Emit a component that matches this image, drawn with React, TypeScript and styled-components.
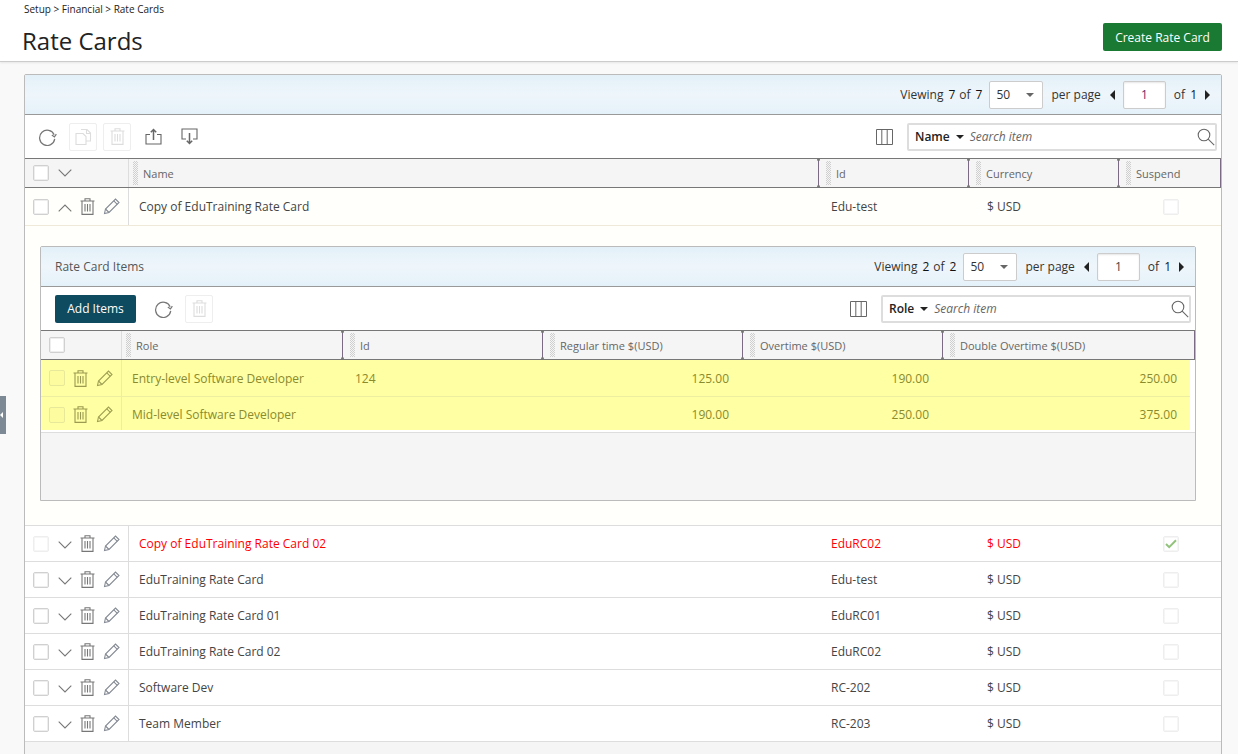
import React from "react";
import styled, { createGlobalStyle } from "styled-components";

const GlobalStyle = createGlobalStyle`
  html, body {
    margin: 0;
    padding: 0;
    height: 100%;
    overflow: hidden;
    background: #f9f9f9;
    font-family: "Open Sans", "Liberation Sans", sans-serif;
    font-size: 12px;
    color: #444;
  }
`;

const Page = styled.div`
  height: 754px;
  overflow: hidden;
  position: relative;
`;

const PageHeader = styled.header`
  align-items: flex-start;
  background: #fff;
  border-bottom: 1px solid #ccc;
  box-shadow: 0 1px 2px rgba(0, 0, 0, 0.08);
  box-sizing: border-box;
  display: flex;
  height: 62px;
  justify-content: space-between;
  padding: 0 16px 0 22px;
`;

const Breadcrumb = styled.div`
  color: #222;
  font-size: 10px;
  line-height: 14px;
  margin: 2px 0 0 2px;
`;

const Title = styled.h1`
  color: #222;
  font-size: 24px;
  font-weight: 400;
  line-height: 32px;
  margin: 9px 0 0;
`;

const PrimaryButton = styled.button`
  background: #1a7a34;
  border: none;
  border-radius: 2px;
  color: #fff;
  font-family: inherit;
  font-size: 12px;
  height: 28px;
  margin-top: 23px;
  padding: 0;
  width: 119px;
`;

const Content = styled.main`
  padding: 12px 16px 0 24px;
`;

const Panel = styled.section<{ $nested?: boolean }>`
  background: #f5f5f5;
  border: 1px solid #bbb;
  border-radius: 2px 2px 0 0;
  ${({ $nested }) => ($nested ? "height: 255px; box-sizing: border-box;" : "height: 700px;")}
`;

const TopBar = styled.div`
  align-items: center;
  background: linear-gradient(#e3f0f8, #eef6fb 50%, #e5f1f9);
  border-bottom: 1px solid #999;
  box-sizing: border-box;
  display: flex;
  height: 40px;
  justify-content: space-between;
  padding: 0 11px 0 14px;
`;

const BarTitle = styled.div`
  color: #555;
  font-size: 12px;
`;

const Pager = styled.div`
  align-items: center;
  color: #333;
  display: flex;
  font-size: 12px;
`;

const PagerNum = styled.span`
  color: #111;
  font-weight: 500;
  margin: 0 4px 0 5px;
`;

const PageSize = styled.div`
  align-items: center;
  background: #fff;
  border: 1px solid #ccc;
  border-radius: 2px;
  box-sizing: border-box;
  display: flex;
  height: 28px;
  justify-content: space-between;
  margin: 0 8px 0 3px;
  padding: 0 8px 0 6px;
  width: 54px;
`;

const Caret = styled.span<{ $dark?: boolean }>`
  border-left: 4px solid transparent;
  border-right: 4px solid transparent;
  border-top: 4px solid ${({ $dark }) => ($dark ? "#222" : "#666")};
  display: inline-block;
`;

const PageArrow = styled.span<{ $dir: "left" | "right" }>`
  border-bottom: 5px solid transparent;
  border-top: 5px solid transparent;
  ${({ $dir }) =>
    $dir === "left"
      ? "border-right: 5px solid #222; margin: 0 8px 0 9px;"
      : "border-left: 5px solid #222; margin-left: 4px;"}
`;

const PageInput = styled.div<{ $tone?: string }>`
  align-items: center;
  background: #fff;
  border: 1px solid #ccc;
  border-radius: 2px;
  box-shadow: inset 0 1px 2px rgba(0, 0, 0, 0.1);
  box-sizing: border-box;
  color: ${({ $tone }) => $tone ?? "#444"};
  display: flex;
  height: 28px;
  justify-content: center;
  margin-right: 8px;
  width: 43px;
`;

const Toolbar = styled.div<{ $left: number }>`
  align-items: center;
  background: #fff;
  box-sizing: border-box;
  display: flex;
  height: 43px;
  justify-content: space-between;
  padding: 0 4px 0 ${({ $left }) => $left}px;
`;

const ToolGroup = styled.div`
  align-items: center;
  display: flex;
`;

const ToolIcon = styled.span<{ $boxed?: boolean; $gap?: number }>`
  align-items: center;
  border: 1px solid ${({ $boxed }) => ($boxed ? "#eee" : "transparent")};
  border-radius: 2px;
  box-sizing: border-box;
  display: inline-flex;
  height: 28px;
  justify-content: center;
  margin-left: ${({ $gap }) => $gap ?? 0}px;
  width: 28px;
`;

const SecondaryButton = styled.button`
  background: #0e4a60;
  border: none;
  border-radius: 2px;
  color: #fff;
  font-family: inherit;
  font-size: 12px;
  height: 28px;
  margin-right: 13px;
  padding: 0;
  width: 81px;
`;

const SearchBox = styled.div`
  align-items: center;
  background: #fff;
  border: 2px solid #ddd;
  border-radius: 2px;
  box-sizing: border-box;
  display: flex;
  height: 28px;
  margin-left: 14px;
  padding-left: 6px;
  width: 310px;
`;

const SearchField = styled.b`
  align-items: center;
  color: #222;
  display: flex;
  font-size: 12px;
  font-weight: 600;
  gap: 6px;
  margin-right: 6px;
`;

const SearchHint = styled.i`
  color: #666;
  flex: 1;
  font-size: 12px;
`;

const Grid = styled.div<{ $cols: string }>`
  display: grid;
  grid-template-columns: ${({ $cols }) => $cols};
`;

const HeaderRow = styled(Grid)`
  background: #f5f5f5;
  border-bottom: 1px solid #777;
  border-top: 1px solid #777;
  box-sizing: border-box;
  height: 30px;
`;

const HeaderCell = styled.div<{ $handle?: boolean }>`
  align-items: center;
  border-left: 1px solid ${({ $handle }) => ($handle ? "#7b6a86" : "#ddd")};
  box-sizing: border-box;
  color: #666;
  display: flex;
  font-size: 11px;
  gap: 5px;
  padding-left: ${({ $handle }) => ($handle ? 7 : 4)}px;
  position: relative;

  ${({ $handle }) =>
    $handle &&
    `&::before, &::after {
      background: #777;
      border-radius: 50%;
      content: "";
      height: 3px;
      left: -2px;
      position: absolute;
      width: 3px;
    }
    &::before { top: -1px; }
    &::after { bottom: -1px; }`}
`;

const EndMark = styled.span`
  border-right: 1px solid #7b6a86;
  bottom: 0;
  position: absolute;
  right: 0;
  top: 0;
`;

const Grip = styled.span`
  background: repeating-conic-gradient(#cfcfcf 0 25%, #f5f5f5 0 50%) 0 0 / 2px 2px;
  height: 24px;
  width: 5px;
`;

const ActionHead = styled.div`
  align-items: center;
  display: flex;
  gap: 9px;
  padding-left: 8px;
`;

const Row = styled(Grid)<{ $bg?: string; $h: number; $line?: string; $tone?: string }>`
  background: ${({ $bg }) => $bg ?? "#fff"};
  border-bottom: 1px solid ${({ $line }) => $line ?? "#ddd"};
  box-sizing: border-box;
  color: ${({ $tone }) => $tone ?? "#444"};
  height: ${({ $h }) => $h}px;
`;

const ActionCell = styled.div<{ $line?: string }>`
  align-items: center;
  border-right: 1px solid ${({ $line }) => $line ?? "#ddd"};
  display: flex;
  margin-right: -1px;
  padding-left: 8px;
`;

const Cell = styled.div<{ $right?: boolean; $center?: boolean; $pad?: number }>`
  align-items: center;
  display: flex;
  justify-content: ${({ $right, $center }) => ($right ? "flex-end" : $center ? "center" : "flex-start")};
  padding: ${({ $right, $pad }) => ($right ? `0 ${$pad ?? 13}px 0 0` : `0 0 0 ${$pad ?? 11}px`)};
`;

const Check = styled.span<{ $faded?: boolean; $tint?: string; $edge?: string }>`
  align-items: center;
  background: ${({ $tint }) => $tint ?? "#fff"};
  border: 1px solid ${({ $faded, $edge }) => $edge ?? ($faded ? "#eee" : "#d0d0d0")};
  border-radius: 2px;
  box-shadow: inset 0 0 0 1px ${({ $faded, $tint }) => ($tint ? "transparent" : $faded ? "#f6f6f6" : "#eee")};
  box-sizing: border-box;
  display: inline-flex;
  flex: none;
  height: 16px;
  justify-content: center;
  width: 16px;
`;

const RowIcons = styled.span`
  align-items: center;
  display: flex;
  gap: 8px;
  margin-left: 8px;
`;

const ChevronSlot = styled.span`
  display: inline-flex;
  margin: 2px 0 0 1px;
`;

const Expanded = styled.div`
  background: #fffffb;
  border-bottom: 1px solid #ddd;
  box-sizing: border-box;
  height: 300px;
  padding: 20px 25px 0 15px;
`;

const NestedRows = styled.div`
  background: #fff;
  border-bottom: 1px solid #ddd;
  box-sizing: border-box;
  height: 73px;
  padding-right: 5px;
`;

const NestedClip = styled.div`
  height: 70px;
  overflow: hidden;
`;

const CollapseTab = styled.div`
  align-items: center;
  background: #7d8a96;
  display: flex;
  height: 38px;
  left: 0;
  position: absolute;
  top: 396px;
  width: 6px;
`;

const TabArrow = styled.span`
  border-bottom: 3px solid transparent;
  border-right: 3px solid #fff;
  border-top: 3px solid transparent;
`;

const Refresh = () => (
  <svg width="19" height="19" viewBox="0 0 20 20" fill="none" stroke="#777" strokeWidth="1.3">
    <path d="M17 8.2A8 8 0 1 0 17.6 12.5" />
    <path d="M14.6 8.4l2.7 2 2-2.8" />
  </svg>
);

const Copy = () => (
  <svg width="18" height="18" viewBox="0 0 18 18" fill="none" stroke="#ddd" strokeWidth="1.1">
    <path d="M7 1.5h6l3.5 3.5v8H12" />
    <path d="M12.5 1.5v4h4" />
    <path d="M2 5.5h7l3 3v8H2z" />
  </svg>
);

const Trash = ({ color = "#777" }: { color?: string }) => (
  <svg width="15" height="17" viewBox="0 0 15 17" fill="none" stroke={color} strokeWidth="1.1">
    <path d="M.5 3h14M5 3V.8h5V3M2 3v13.4h11V3" />
    <path d="M5 6v7.5M7.5 6v7.5M10 6v7.5" />
  </svg>
);

const Pencil = ({ color = "#858b94" }: { color?: string }) => (
  <svg width="17" height="17" viewBox="0 0 17 17" fill="none" stroke={color} strokeWidth="1.1">
    <path d="M1.5 15.5l1-4.5L12.5 1l3.5 3.5-10 10z" />
    <path d="M2.5 11l3.5 3.5M10.8 2.8l3.5 3.5" />
  </svg>
);

const Chevron = ({ up }: { up?: boolean }) => (
  <svg width="14" height="8" viewBox="0 0 14 8" fill="none" stroke="#777" strokeWidth="1.1">
    <path d={up ? "M.7 7.3L7 1l6.3 6.3" : "M.7.7L7 7l6.3-6.3"} />
  </svg>
);

const Upload = () => (
  <svg width="17" height="17" viewBox="0 0 17 17" fill="none" stroke="#666" strokeWidth="1.1">
    <path d="M5 6.5H1v9.5h15V6.5h-4" />
    <path d="M8.5 12V1.5M5.8 4.2l2.7-2.7 2.7 2.7" strokeWidth="1.5" />
  </svg>
);

const Download = () => (
  <svg width="17" height="17" viewBox="0 0 17 17" fill="none" stroke="#666" strokeWidth="1.1">
    <path d="M5 11H1V1h15v10h-4" />
    <path d="M8.5 5v10.5M5.8 12.8l2.7 2.7 2.7-2.7" strokeWidth="1.5" />
  </svg>
);

const Columns = () => (
  <svg width="17" height="16" viewBox="0 0 17 16" fill="none" stroke="#666" strokeWidth="1">
    <path d="M.5.5h16v15H.5zM5.8.5v15M11.2.5v15" />
  </svg>
);

const Search = () => (
  <svg width="18" height="18" viewBox="0 0 18 18" fill="none" stroke="#666" strokeWidth="1.1">
    <circle cx="7" cy="7" r="5.8" />
    <path d="M11.2 11.2l6 6" />
  </svg>
);

const Tick = () => (
  <svg width="12" height="10" viewBox="0 0 12 10" fill="none" stroke="#93c27c" strokeWidth="2">
    <path d="M1 5l3.2 3.2L11 1.2" />
  </svg>
);

const PagerBlock = ({ total, inputTone }: { total: number; inputTone?: string }) => (
  <Pager>
    Viewing
    <PagerNum>{total}</PagerNum>
    of
    <PagerNum>{total}</PagerNum>
    <PageSize>
      50 <Caret />
    </PageSize>
    per page
    <PageArrow $dir="left" />
    <PageInput $tone={inputTone}>1</PageInput>
    of
    <PagerNum>1</PagerNum>
    <PageArrow $dir="right" />
  </Pager>
);

const SearchBlock = ({ field }: { field: string }) => (
  <SearchBox>
    <SearchField>
      {field} <Caret $dark />
    </SearchField>
    <SearchHint>Search item</SearchHint>
    <Search />
  </SearchBox>
);

const mainCols = "103px 690px 150px 150px 1fr";
const itemCols = "80px 221px 200px 200px 200px 1fr";

const cards = [
  { name: "Copy of EduTraining Rate Card 02", id: "EduRC02", suspended: true },
  { name: "EduTraining Rate Card", id: "Edu-test" },
  { name: "EduTraining Rate Card 01", id: "EduRC01" },
  { name: "EduTraining Rate Card 02", id: "EduRC02" },
  { name: "Software Dev", id: "RC-202" },
  { name: "Team Member", id: "RC-203" },
];

const items = [
  { role: "Entry-level Software Developer", id: "124", regular: "125.00", over: "190.00", double: "250.00", h: 37 },
  { role: "Mid-level Software Developer", id: "", regular: "190.00", over: "250.00", double: "375.00", h: 36 },
];

const itemHeads = ["Id", "Regular time $(USD)", "Overtime $(USD)", "Double Overtime $(USD)"];

const App = () => (
  <Page>
    <GlobalStyle />
    <PageHeader>
      <div>
        <Breadcrumb>Setup &gt; Financial &gt; Rate Cards</Breadcrumb>
        <Title>Rate Cards</Title>
      </div>
      <PrimaryButton>Create Rate Card</PrimaryButton>
    </PageHeader>
    <CollapseTab>
      <TabArrow />
    </CollapseTab>
    <Content>
      <Panel>
        <TopBar>
          <span />
          <PagerBlock total={7} inputTone="#6b2a6b" />
        </TopBar>
        <Toolbar $left={8}>
          <ToolGroup>
            <ToolIcon><Refresh /></ToolIcon>
            <ToolIcon $boxed $gap={8}><Copy /></ToolIcon>
            <ToolIcon $boxed $gap={6}><Trash color="#ddd" /></ToolIcon>
            <ToolIcon $gap={8}><Upload /></ToolIcon>
            <ToolIcon $gap={8}><Download /></ToolIcon>
          </ToolGroup>
          <ToolGroup>
            <Columns />
            <SearchBlock field="Name" />
          </ToolGroup>
        </Toolbar>
        <HeaderRow $cols={mainCols}>
          <ActionHead>
            <Check />
            <Chevron />
          </ActionHead>
          <HeaderCell><Grip />Name</HeaderCell>
          <HeaderCell $handle><Grip />Id</HeaderCell>
          <HeaderCell $handle><Grip />Currency</HeaderCell>
          <HeaderCell $handle><Grip />Suspend<EndMark /></HeaderCell>
        </HeaderRow>
        <Row $cols={mainCols} $h={38} $bg="#fffffb" $line="#eee9d8">
          <ActionCell>
            <Check />
            <RowIcons>
              <ChevronSlot><Chevron up /></ChevronSlot>
              <Trash />
              <Pencil />
            </RowIcons>
          </ActionCell>
          <Cell>Copy of EduTraining Rate Card</Cell>
          <Cell $pad={13}>Edu-test</Cell>
          <Cell $pad={19}>$ USD</Cell>
          <Cell $center $pad={3}><Check $faded /></Cell>
        </Row>
        <Expanded>
          <Panel $nested>
            <TopBar>
              <BarTitle>Rate Card Items</BarTitle>
              <PagerBlock total={2} />
            </TopBar>
            <Toolbar $left={14}>
              <ToolGroup>
                <SecondaryButton>Add Items</SecondaryButton>
                <ToolIcon><Refresh /></ToolIcon>
                <ToolIcon $boxed $gap={8}><Trash color="#ddd" /></ToolIcon>
              </ToolGroup>
              <ToolGroup>
                <Columns />
                <SearchBlock field="Role" />
              </ToolGroup>
            </Toolbar>
            <HeaderRow $cols={itemCols}>
              <ActionHead>
                <Check />
              </ActionHead>
              <HeaderCell><Grip />Role</HeaderCell>
              {itemHeads.map((head, index) => (
                <HeaderCell $handle key={head}>
                  <Grip />
                  {head}
                  {index === itemHeads.length - 1 && <EndMark />}
                </HeaderCell>
              ))}
            </HeaderRow>
            <NestedRows>
              <NestedClip>
                {items.map((item) => (
                  <Row key={item.role} $cols={itemCols} $h={item.h} $bg="#ffffa3" $line="#eeeea0" $tone="#8a8a2e">
                    <ActionCell $line="#eeee9c">
                      <Check $tint="#fdfd9f" $edge="#e8e89a" />
                      <RowIcons>
                        <Trash color="#9a9a50" />
                        <Pencil color="#a0a055" />
                      </RowIcons>
                    </ActionCell>
                    <Cell>{item.role}</Cell>
                    <Cell $pad={13}>{item.id}</Cell>
                    <Cell $right>{item.regular}</Cell>
                    <Cell $right>{item.over}</Cell>
                    <Cell $right>{item.double}</Cell>
                  </Row>
                ))}
              </NestedClip>
            </NestedRows>
          </Panel>
        </Expanded>
        {cards.map((card) => (
          <Row key={card.name} $cols={mainCols} $h={36} $tone={card.suspended ? "#f00" : undefined}>
            <ActionCell>
              <Check $faded={card.suspended} />
              <RowIcons>
                <ChevronSlot><Chevron /></ChevronSlot>
                <Trash />
                <Pencil />
              </RowIcons>
            </ActionCell>
            <Cell>{card.name}</Cell>
            <Cell $pad={13}>{card.id}</Cell>
            <Cell $pad={19}>$ USD</Cell>
            <Cell $center $pad={3}>
              <Check $faded>{card.suspended && <Tick />}</Check>
            </Cell>
          </Row>
        ))}
      </Panel>
    </Content>
  </Page>
);

export default App;
